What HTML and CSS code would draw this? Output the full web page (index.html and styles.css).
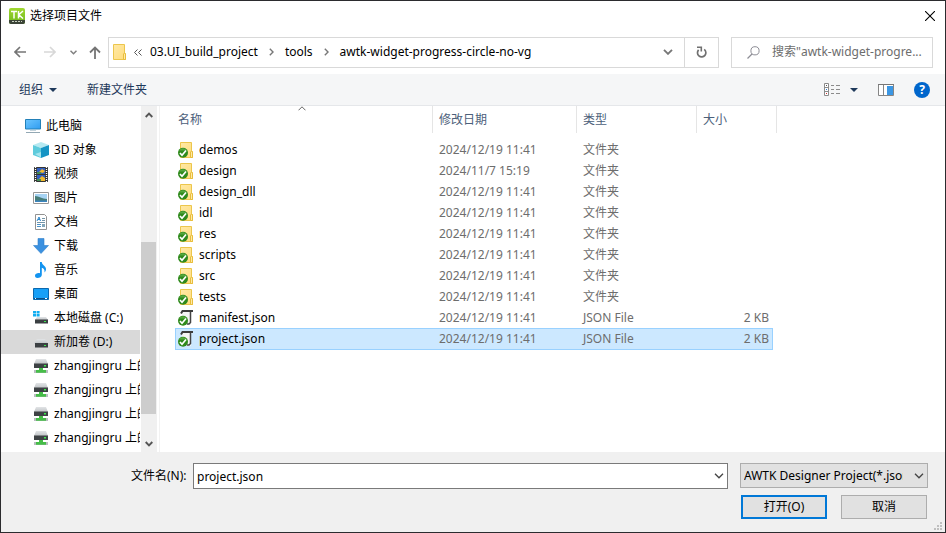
FILE: index.html
```html
<!DOCTYPE html>
<html lang="zh-CN">
<head>
    <meta charset="UTF-8">
    <meta name="viewport" content="width=device-width, initial-scale=1.0">
    <title>选择项目文件</title>
    <link rel="stylesheet" href="styles.css">
</head>
<body>

<!-- shared icons -->
<svg class="sprite" aria-hidden="true">
    <defs>
        <linearGradient id="folder-fill" x1="0" y1="0" x2="1" y2="1">
            <stop offset="0" stop-color="#ffe9a6"/>
            <stop offset="1" stop-color="#ffdc7c"/>
        </linearGradient>
        <linearGradient id="screen-fill" x1="0" y1="0" x2="1" y2="1">
            <stop offset="0" stop-color="#6cc6ff"/>
            <stop offset="1" stop-color="#2f9cf0"/>
        </linearGradient>
        <linearGradient id="disk-top" x1="0" y1="0" x2="0" y2="1">
            <stop offset="0" stop-color="#e2e4e6"/>
            <stop offset="1" stop-color="#bfc3c6"/>
        </linearGradient>
        <linearGradient id="tk-fill" x1="0" y1="0" x2="0" y2="1">
            <stop offset="0" stop-color="#a0d830"/>
            <stop offset="1" stop-color="#6fb81e"/>
        </linearGradient>
    </defs>
    <symbol id="folder" viewBox="0 0 16 16">
        <path d="M2.500 .5h11v9h1v6h-12z" fill="url(#folder-fill)" stroke="#ecc64c"/>
        <path d="M12.500 15.500v-5.500l1-1 1 1v5.500z" fill="#ffe9a6" stroke="#e8bd3c"/>
    </symbol>
    <symbol id="synced" viewBox="0 0 16 16">
        <circle cx="5" cy="10.800" r="5" fill="#2f8a1c"/>
        <path d="M1 8.500a4.600 4.600 0 0 1 8 0z" fill="#55a63e"/>
        <path d="M2 11l2 2.200 4-4.700" fill="none" stroke="#fff" stroke-width="1.700"/>
    </symbol>
    <symbol id="script" viewBox="0 0 16 16">
        <path d="M5 1h9v1.500h-1V15H4V3z" fill="#f4f4f4"/>
        <path d="M3 3.500l1.500-2.500h10.500" fill="none" stroke="#3c3c3c" stroke-width="2"/>
        <path d="M12.500 2v10.500l-1.500 1.500H9" fill="none" stroke="#444" stroke-width="1.500"/>
    </symbol>
    <symbol id="net-drive" viewBox="0 0 16 16">
        <path d="M3 1h10l2 5H1z" fill="url(#disk-top)"/>
        <rect x="1" y="5.500" width="14" height="4.500" fill="#3e4245"/>
        <rect x="11" y="7" width="2" height="1.500" fill="#3bea4d"/>
        <rect x="1" y="12" width="14" height="3" fill="#b9bdc0"/>
        <path d="M6 10h4v2h3v2.800H3V12h3z" fill="#46bd48"/>
    </symbol>
    <symbol id="chevron" viewBox="0 0 10 6">
        <path d="M1 .8l4 4 4-4" fill="none" stroke="currentColor" stroke-width="1.300"/>
    </symbol>
</svg>

<div class="dialog">
    <header class="titlebar">
        <svg class="icon" viewBox="0 0 16 16">
            <rect width="16" height="16" rx="2" fill="url(#tk-fill)"/>
            <path d="M0 12h16v2a2 2 0 0 1-2 2H2a2 2 0 0 1-2-2z" fill="#3c4438"/>
            <path d="M3 13.500h10" stroke="#c8d0c0" stroke-dasharray="2 1"/>
            <path d="M2 3.500h6M5 3.500V10.500M9.500 3v7.500M14 3l-4.200 3.700L14 10.500" fill="none" stroke="#fff" stroke-width="1.500"/>
        </svg>
        <h1 class="title">选择项目文件</h1>
        <button class="plain close" aria-label="关闭">
            <svg width="10" height="10" viewBox="0 0 10 10"><path d="M0 0l10 10M10 0L0 10" stroke="#000" stroke-width="1.100"/></svg>
        </button>
    </header>

    <nav class="navbar">
        <div class="history">
            <button class="plain" aria-label="后退">
                <svg width="12" height="12" viewBox="0 0 12 12"><path d="M12 6H1.500M6 1L1 6l5 5" fill="none" stroke="#757575" stroke-width="1.700"/></svg>
            </button>
            <button class="plain forward" aria-label="前进">
                <svg width="12" height="12" viewBox="0 0 12 12"><path d="M0 6h10.500M6 1l5 5-5 5" fill="none" stroke="#d8d8d8" stroke-width="1.700"/></svg>
            </button>
            <button class="plain" aria-label="最近浏览的位置">
                <svg width="7" height="5" viewBox="0 0 7 5"><path d="M.5 .8l3 3 3-3" fill="none" stroke="#808080" stroke-width="1.500"/></svg>
            </button>
            <button class="plain" aria-label="上移">
                <svg width="12" height="13" viewBox="0 0 12 13"><path d="M6 13V1.500M1 6.500l5-5 5 5" fill="none" stroke="#757575" stroke-width="1.800"/></svg>
            </button>
        </div>
        <div class="address">
            <svg class="icon"><use href="#folder"/></svg>
            <svg class="more" width="8" height="7" viewBox="0 0 8 7"><path d="M3.500 .5l-3 3 3 3M7.500 .5l-3 3 3 3" fill="none" stroke="#555"/></svg>
            <a href="#">03.UI_build_project</a>
            <svg class="sep" width="5" height="8" viewBox="0 0 5 8"><path d="M.8 .8L4 4 .8 7.200" fill="none" stroke="#777" stroke-width="1.400"/></svg>
            <a href="#">tools</a>
            <svg class="sep" width="5" height="8" viewBox="0 0 5 8"><path d="M.8 .8L4 4 .8 7.200" fill="none" stroke="#777" stroke-width="1.400"/></svg>
            <a href="#">awtk-widget-progress-circle-no-vg</a>
            <button class="plain drop" aria-label="以前的位置">
                <svg width="10" height="6" viewBox="0 0 10 6"><path d="M1 .8l4 4 4-4" fill="none" stroke="#777" stroke-width="1.900"/></svg>
            </button>
            <button class="plain refresh" aria-label="刷新">
                <svg width="11" height="12" viewBox="0 0 11 12">
                    <path d="M2.600 3.900a4.200 4.200 0 1 0 5.600-.5" fill="none" stroke="#707070" stroke-width="1.700"/>
                    <path d="M1 1.200h4.300v4.300" fill="none" stroke="#707070" stroke-width="1.600"/>
                </svg>
            </button>
        </div>
        <label class="search">
            <svg width="13" height="13" viewBox="0 0 13 13"><circle cx="8" cy="4.800" r="4.100" fill="none" stroke="#8d8d95"/><path d="M5 8L.5 12.500" stroke="#8d8d95" stroke-width="1.200"/></svg>
            <input type="text" aria-label="搜索" placeholder='搜索"awtk-widget-progre...'>
        </label>
    </nav>

    <div class="toolbar">
        <button class="plain">组织
            <svg width="8" height="4" viewBox="0 0 8 4"><path d="M0 0h8L4 4z" fill="#1e395b"/></svg>
        </button>
        <button class="plain">新建文件夹</button>
        <div class="views">
            <button class="plain view-mode" aria-label="更改视图">
                <svg width="16" height="14" viewBox="0 0 16 14">
                    <path d="M.5 .5h4v12h-4zM.5 4.500h4M.5 8.500h4M7 2.500h3M12 2.500h4M7 6.500h3M12 6.500h4M7 10.500h3M12 10.500h4" fill="#fff" stroke="#8b8b8b"/>
                    <path d="M2 2h1v1H2z" fill="#555"/><path d="M2 6h1v1H2z" fill="#2a7bd0"/><path d="M2 10h1v1H2z" fill="#c33"/>
                </svg>
                <svg width="8" height="4" viewBox="0 0 8 4"><path d="M0 0h8L4 4z" fill="#1e395b"/></svg>
            </button>
            <button class="plain" aria-label="显示预览窗格">
                <svg width="16" height="12" viewBox="0 0 16 12">
                    <path d="M.5 .5h15v11H.5zM5.500 1v10" fill="#fff" stroke="#858585"/>
                    <path d="M0 .5h16" stroke="#777"/><rect x="9" y="2" width="6" height="9" fill="#3b97e4"/>
                </svg>
            </button>
            <button class="plain help" aria-label="获取帮助">?</button>
        </div>
    </div>

    <main class="content">
        <div class="sidebar">
            <ul class="tree">
                <li class="root">
                    <svg class="icon" viewBox="0 0 16 16"><path d="M.5 1.500h15v9.500H.5z" fill="url(#screen-fill)" stroke="#2380b8"/><path d="M5 12.500h6" stroke="#c5d4dc"/><path d="M1 14.500h14" stroke="#93a8b4"/></svg>
                    此电脑
                </li>
                <li>
                    <svg class="icon" viewBox="0 0 16 16"><path d="M0 3l8-3 8 3-8 3z" fill="#b6e9f1"/><path d="M0 3l8 3v10l-8-3z" fill="#5ecbdc"/><path d="M16 3L8 6v10l8-3z" fill="#1594c4"/><path d="M2 12l6-2v5.500z" fill="#a4e4ee"/></svg>
                    3D 对象
                </li>
                <li>
                    <svg class="icon" viewBox="0 0 16 16"><rect x="1" y="1" width="14" height="15" fill="#353535"/><path d="M2.500 1v15M13.500 1v15" stroke="#fff" stroke-width="1.300" stroke-dasharray="1 1"/><path d="M4 2h8v6H4zM4 9h8v6H4z" fill="#315fc2"/><path d="M6 6l3-3 3 2-2 2zM5 14l4-4 3 2v3H7z" fill="#f1b82d"/><path d="M4 6h4v2H4zM4 13h4v2H4z" fill="#438c55"/></svg>
                    视频
                </li>
                <li>
                    <svg class="icon" viewBox="0 0 16 16"><path d="M.5 2.500h15v11H.5z" fill="#fff" stroke="#969696"/><path d="M2 4h12v8H2z" fill="#a6d3f3"/><path d="M2 6c4 0 7 3 12 3v3H2z" fill="#477d78"/><path d="M2 10.500h12V12H2z" fill="#3b84bf"/></svg>
                    图片
                </li>
                <li>
                    <svg class="icon" viewBox="0 0 16 16"><path d="M2.500 .5h9l2 2v13h-11z" fill="#fff" stroke="#929292"/><path d="M4 7l2-4 1.500 4M5 5.500h2" fill="none" stroke="#2a87cc"/><path d="M9 4.500h3M9 6.500h3M4 8.500h8" stroke="#7394a8"/><path d="M4 10.500h4M4 12.500h4" stroke="#4b93c9"/><path d="M9 10h3v3H9z" fill="#83a6b9"/></svg>
                    文档
                </li>
                <li>
                    <svg class="icon" viewBox="0 0 16 16"><path d="M5 .5h6v7h4.500L8 15.500.5 7.500H5z" fill="#3b91e0" stroke="#2f7fc9" stroke-width=".6"/></svg>
                    下载
                </li>
                <li>
                    <svg class="icon" viewBox="0 0 16 16"><path d="M7 0h1.800c0 3 4.200 3.800 4.200 7 0 1.400-.6 2.600-1.500 3.500.5-3-1-4.300-2.700-4.700V13c0 2-2.300 3-4.300 3S2 14.800 2 13.500c0-1.700 2.700-3 5-2.300z" fill="#1394f0"/></svg>
                    音乐
                </li>
                <li>
                    <svg class="icon" viewBox="0 0 16 16"><path d="M.5 2.500h15v11H.5z" fill="#17a0f7" stroke="#0b68ae"/><path d="M1 12.500h14" stroke="#0a4f88"/><path d="M2 12.500h1M12 12.500h2" stroke="#fff"/></svg>
                    桌面
                </li>
                <li>
                    <svg class="icon" viewBox="0 0 16 16"><path d="M0 1h3v2.500H0zM3.600 1h3v2.500h-3zM0 4h3v2.500H0zM3.600 4h3v2.500h-3z" fill="#12adf0"/><path d="M4 7h9l2 3H2z" fill="url(#disk-top)"/><rect x="2" y="9.500" width="13" height="4" fill="#3b3f42"/><rect x="11" y="11" width="2" height="1" fill="#3bea4d"/></svg>
                    本地磁盘 (C:)
                </li>
                <li class="current">
                    <svg class="icon" viewBox="0 0 16 16"><path d="M4 5h8l3 4.500H1z" fill="url(#disk-top)"/><rect x="2" y="9" width="13" height="4.500" fill="#3b3f42"/><rect x="11" y="11" width="2" height="1" fill="#3bea4d"/></svg>
                    新加卷 (D:)
                </li>
                <li><svg class="icon"><use href="#net-drive"/></svg>zhangjingru 上的</li>
                <li><svg class="icon"><use href="#net-drive"/></svg>zhangjingru 上的</li>
                <li><svg class="icon"><use href="#net-drive"/></svg>zhangjingru 上的</li>
                <li><svg class="icon"><use href="#net-drive"/></svg>zhangjingru 上的</li>
            </ul>
            <div class="scrollbar">
                <button class="plain" aria-label="向上滚动"><svg width="8" height="6" viewBox="0 0 8 6"><path d="M.7 5L4 1.700 7.300 5" fill="none" stroke="#555" stroke-width="1.900"/></svg></button>
                <div class="track"><div class="thumb"></div></div>
                <button class="plain" aria-label="向下滚动"><svg width="8" height="6" viewBox="0 0 8 6"><path d="M.7 1L4 4.300 7.300 1" fill="none" stroke="#555" stroke-width="1.900"/></svg></button>
            </div>
        </div>

        <div class="files">
            <table class="file-table">
                <colgroup>
                    <col class="col-name"><col class="col-date"><col class="col-type"><col class="col-size"><col class="col-edge">
                </colgroup>
                <thead>
                    <tr>
                        <th class="sorted">名称<svg class="sort" width="8" height="5" viewBox="0 0 8 5"><path d="M.5 4.300L4 .8l3.500 3.500" fill="none" stroke="#666"/></svg></th>
                        <th>修改日期</th>
                        <th>类型</th>
                        <th colspan="2">大小</th>
                    </tr>
                </thead>
                <tbody>
                    <tr><td><span class="file"><svg class="icon"><use href="#folder"/><use href="#synced"/></svg>demos</span></td><td>2024/12/19 11:41</td><td>文件夹</td><td></td></tr>
                    <tr><td><span class="file"><svg class="icon"><use href="#folder"/><use href="#synced"/></svg>design</span></td><td>2024/11/7 15:19</td><td>文件夹</td><td></td></tr>
                    <tr><td><span class="file"><svg class="icon"><use href="#folder"/><use href="#synced"/></svg>design_dll</span></td><td>2024/12/19 11:41</td><td>文件夹</td><td></td></tr>
                    <tr><td><span class="file"><svg class="icon"><use href="#folder"/><use href="#synced"/></svg>idl</span></td><td>2024/12/19 11:41</td><td>文件夹</td><td></td></tr>
                    <tr><td><span class="file"><svg class="icon"><use href="#folder"/><use href="#synced"/></svg>res</span></td><td>2024/12/19 11:41</td><td>文件夹</td><td></td></tr>
                    <tr><td><span class="file"><svg class="icon"><use href="#folder"/><use href="#synced"/></svg>scripts</span></td><td>2024/12/19 11:41</td><td>文件夹</td><td></td></tr>
                    <tr><td><span class="file"><svg class="icon"><use href="#folder"/><use href="#synced"/></svg>src</span></td><td>2024/12/19 11:41</td><td>文件夹</td><td></td></tr>
                    <tr><td><span class="file"><svg class="icon"><use href="#folder"/><use href="#synced"/></svg>tests</span></td><td>2024/12/19 11:41</td><td>文件夹</td><td></td></tr>
                    <tr><td><span class="file"><svg class="icon"><use href="#script"/><use href="#synced"/></svg>manifest.json</span></td><td>2024/12/19 11:41</td><td>JSON File</td><td>2 KB</td></tr>
                    <tr class="selected"><td><span class="file"><svg class="icon"><use href="#script"/><use href="#synced"/></svg>project.json</span></td><td>2024/12/19 11:41</td><td>JSON File</td><td>2 KB</td></tr>
                </tbody>
            </table>
        </div>
    </main>

    <footer class="footer">
        <div class="name-row">
            <label for="filename">文件名(N):</label>
            <div class="combo filename">
                <input type="text" id="filename" value="project.json">
                <svg class="arrow" width="10" height="6"><use href="#chevron"/></svg>
            </div>
            <div class="combo filter">
                <select aria-label="文件类型">
                    <option>AWTK Designer Project(*.json)</option>
                </select>
                <svg class="arrow" width="10" height="6"><use href="#chevron"/></svg>
            </div>
        </div>
        <div class="actions">
            <button class="btn primary">打开(O)</button>
            <button class="btn">取消</button>
        </div>
        <svg class="grip" width="8" height="8" viewBox="0 0 8 8"><path d="M6 0h2v2H6zM3 3h2v2H3zM6 3h2v2H6zM0 6h2v2H0zM3 6h2v2H3zM6 6h2v2H6z" fill="#bfbfbf"/></svg>
    </footer>
</div>

</body>
</html>
```

FILE: styles.css
```css
* {
    box-sizing: border-box;
}
body {
    margin: 0;
    font-family: "Noto Sans", "Noto Sans CJK SC", sans-serif;
    font-size: 12px;
    line-height: 16px;
    color: #000;
}
button, input, select {
    font: inherit;
    color: inherit;
}
svg {
    display: block;
    flex: none;
}
.sprite {
    position: absolute;
    width: 0;
    height: 0;
}
.icon {
    width: 16px;
    height: 16px;
}
.plain {
    display: flex;
    align-items: center;
    justify-content: center;
    padding: 0;
    border: none;
    background: none;
}
.dialog {
    display: flex;
    flex-direction: column;
    height: 100vh;
    border: 1px solid #2b2b2e;
    background: #fff;
    overflow: hidden;
}

/* title and navigation */
.titlebar {
    display: flex;
    align-items: center;
    gap: 5px;
    height: 29px;
    padding: 0 10px 0 8px;
}
.title {
    flex: 1;
    margin: 0;
    font-size: 12px;
    font-weight: normal;
}
.navbar {
    display: flex;
    align-items: center;
    height: 44px;
    padding: 0 12px 0 13px;
}
.history {
    display: flex;
    align-items: center;
    gap: 12px;
    margin-right: 7px;
}
.forward {
    margin: 0 2px 0 6px;
}
.address {
    display: flex;
    flex: 1;
    align-items: center;
    height: 31px;
    padding-left: 2px;
    border: 1px solid #d9d9d9;
}
.address a {
    color: #000;
    text-decoration: none;
}
.more {
    margin: 0 8px 0 7px;
}
.sep {
    margin: 0 11px;
}
.drop {
    width: 32px;
    height: 29px;
    margin-left: auto;
}
.refresh {
    width: 34px;
    height: 29px;
    border-left: 1px solid #d9d9d9;
}
.search {
    display: flex;
    align-items: center;
    gap: 12px;
    width: 202px;
    height: 31px;
    margin-left: 12px;
    padding: 0 4px 0 15px;
    border: 1px solid #d9d9d9;
}
.search input {
    width: 100%;
    min-width: 0;
    padding: 0;
    border: none;
    outline: none;
}
.search input::placeholder {
    color: #6d6d6d;
    opacity: 1;
}

/* toolbar */
.toolbar {
    display: flex;
    align-items: center;
    gap: 30px;
    height: 32px;
    padding: 0 15px 0 18px;
    border-bottom: 1px solid #e5e7ea;
    background: #f5f6f7;
    color: #1e395b;
}
.toolbar .plain {
    gap: 6px;
}
.views {
    display: flex;
    align-items: center;
    gap: 20px;
    margin-left: auto;
}
.toolbar .view-mode {
    gap: 10px;
}
.help {
    width: 16px;
    height: 16px;
    border-radius: 50%;
    background: #0066cc;
    color: #fff;
    font-weight: bold;
}

/* folder tree */
.content {
    display: flex;
    flex: 1;
    min-height: 0;
}
.sidebar {
    display: flex;
    width: 159px;
    padding-right: 2px;
    border-right: 1px solid #f2f2f2;
}
.tree {
    flex: 1;
    margin: 0;
    padding: 8px 0 0;
    list-style: none;
    overflow: hidden;
}
.tree li {
    display: flex;
    align-items: center;
    gap: 5px;
    height: 24px;
    padding-left: 32px;
    white-space: nowrap;
}
.tree .root {
    padding-left: 24px;
}
.tree .current {
    background: #d9d9d9;
}
.scrollbar {
    display: flex;
    flex-direction: column;
    width: 17px;
    padding-left: 1px;
    background: #f0f0f0;
    background-clip: content-box;
}
.scrollbar .plain {
    height: 17px;
}
.track {
    display: flex;
    flex: 1;
    flex-direction: column;
    padding-right: 1px;
}
.track::before {
    content: "";
    flex: 119;
}
.track::after {
    content: "";
    flex: 21;
}
.thumb {
    flex: 172;
    background: #cdcdcd;
}

/* file list */
.files {
    flex: 1;
    padding-left: 15px;
    overflow: hidden;
}
.file-table {
    width: 602px;
    table-layout: fixed;
    border-spacing: 0;
    white-space: nowrap;
}
.col-name {
    width: 258px;
}
.col-date {
    width: 144px;
}
.col-type {
    width: 120px;
}
.col-size {
    width: 76px;
}
.file-table th {
    position: relative;
    height: 27px;
    padding: 0 0 0 6px;
    border-right: 1px solid #e5e5e5;
    font-weight: normal;
    text-align: left;
    color: #4c607a;
}
.file-table th.sorted {
    padding-left: 3px;
}
.sort {
    position: absolute;
    top: 0;
    left: 50%;
    margin-left: -6px;
}
.file-table tbody::before {
    content: "";
    display: block;
    height: 6px;
}
.file-table td {
    height: 21px;
    padding: 0 6px;
    color: #6d6d6d;
}
.file-table td:first-child {
    padding: 0 3px;
}
.file-table td:last-child {
    padding: 0 4px;
    text-align: right;
}
.file {
    display: flex;
    align-items: center;
    gap: 5px;
    color: #000;
}
.file-table .selected td {
    height: 22px;
    border: solid #99d1ff;
    border-width: 1px 0;
    background: #cce8ff;
}
.selected td:first-child {
    box-shadow: inset 1px 0 #99d1ff;
}
.selected td:last-child {
    box-shadow: inset -1px 0 #99d1ff;
}

/* file name and buttons */
.footer {
    position: relative;
    height: 80px;
    padding: 11px 17px 0 130px;
    background: #f0f0f0;
}
.name-row {
    display: flex;
    align-items: flex-start;
}
.name-row label {
    width: 57px;
    margin-right: 5px;
    line-height: 26px;
    white-space: nowrap;
}
.combo {
    position: relative;
}
.combo input, .combo select {
    display: block;
    width: 100%;
    margin: 0;
    padding: 0 24px 0 3px;
    border: 1px solid #7a7a7a;
    border-radius: 0;
    outline: none;
    background: #fff;
}
.filename {
    flex: 1;
}
.combo input {
    height: 26px;
}
.filter {
    width: 188px;
    margin-left: 12px;
}
.combo select {
    height: 25px;
    border-color: #adadad;
    background: #e1e1e1;
    appearance: none;
}
.arrow {
    position: absolute;
    top: 10px;
    right: 4px;
    color: #444;
    pointer-events: none;
}
.actions {
    display: flex;
    justify-content: flex-end;
    gap: 14px;
    padding: 6px 1px 0 0;
}
.btn {
    width: 86px;
    height: 24px;
    padding: 0;
    border: 1px solid #adadad;
    background: #e1e1e1;
}
.btn.primary {
    border: 2px solid #0078d7;
}
.grip {
    position: absolute;
    right: 3px;
    bottom: 2px;
}
```
